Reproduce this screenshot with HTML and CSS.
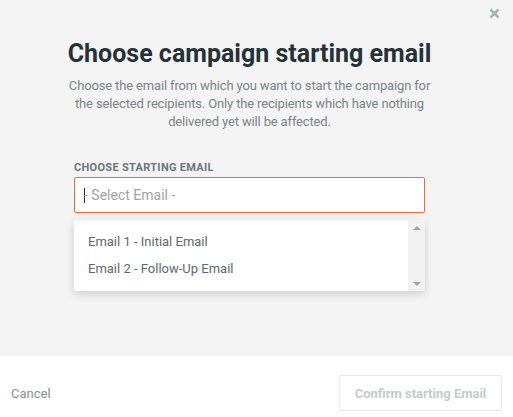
FILE: index.html
```html
<!DOCTYPE html>
<html>
<head>
<meta charset="utf-8">
<link rel="stylesheet" href="styles.css">
</head>
<body>
<div class="modal">
  <div class="modal-body">
    <button class="close" aria-label="Close">
      <svg width="11" height="11" viewBox="0 0 11 11"><path d="M1.5 1.5 L9.5 9.5 M9.5 1.5 L1.5 9.5" stroke="#a9b3b6" stroke-width="2.6" stroke-linecap="butt"/></svg>
    </button>
    <h1 class="title">Choose campaign starting email</h1>
    <p class="desc">Choose the email from which you want to start the campaign for the selected recipients. Only the recipients which have nothing delivered yet will be affected.</p>
    <div class="field">
      <label class="label">Choose starting email</label>
      <div class="picker">
        <span class="caret"></span><span class="placeholder">- Select Email -</span>
      </div>
      <div class="dropdown">
        <ul class="options">
          <li>Email 1 - Initial Email</li>
          <li>Email 2 - Follow-Up Email</li>
        </ul>
        <div class="scrollbar">
          <span class="arrow up"></span>
          <span class="arrow down"></span>
        </div>
      </div>
    </div>
  </div>
  <div class="modal-footer">
    <a class="cancel">Cancel</a>
    <button class="confirm" disabled>Confirm starting Email</button>
  </div>
</div>
</body>
</html>
```
FILE: styles.css
```css
* { box-sizing: border-box; }
html, body { margin: 0; padding: 0; }
body {
  font-family: Roboto, "Liberation Sans", sans-serif;
  background: #ffffff;
  width: 513px;
  height: 417px;
  overflow: hidden;
}
.modal {
  display: flex;
  flex-direction: column;
  height: 417px;
}
.modal-body {
  position: relative;
  background: #f4f4f4;
  height: 356px;
  padding: 38px 14px 0 0;
  display: flex;
  flex-direction: column;
  align-items: center;
}
.close {
  position: absolute;
  top: 8px;
  right: 13px;
  background: none;
  border: 0;
  padding: 0;
  width: 11px;
  height: 11px;
  cursor: pointer;
}
.close svg { display: block; }
.title {
  margin: 0;
  font-size: 25px;
  line-height: 32px;
  font-weight: 700;
  color: #263238;
}
.desc {
  margin: 7px 0 0;
  width: 370px;
  text-align: center;
  font-size: 13px;
  line-height: 18px;
  letter-spacing: -0.15px;
  color: #7a8489;
}
.field {
  width: 351px;
  margin-top: 30px;
  display: flex;
  flex-direction: column;
}
.label {
  font-size: 11px;
  font-weight: 700;
  text-transform: uppercase;
  color: #6d767a;
  line-height: 14px;
  letter-spacing: 0.3px;
}
.picker {
  margin-top: 2px;
  height: 36px;
  background: #fff;
  border: 1px solid #ee6a3f;
  border-radius: 2px;
  display: flex;
  align-items: center;
  padding-left: 9px;
}
.caret {
  width: 1px;
  height: 15px;
  background: #263238;
  margin-right: -1px;
}
.placeholder {
  font-size: 14px;
  color: #9ea4a7;
}
.dropdown {
  margin-top: 7px;
  height: 71px;
  background: #fff;
  border-radius: 3px;
  box-shadow: 0 3px 8px rgba(0,0,0,0.16);
  display: flex;
  overflow: hidden;
}
.options {
  list-style: none;
  margin: 0;
  padding: 8px 0 9px;
  flex: 1;
}
.options li {
  height: 27px;
  line-height: 27px;
  padding-left: 14px;
  font-size: 13px;
  color: #5e686d;
}
.scrollbar {
  width: 17px;
  background: #f1f1f1;
  display: flex;
  flex-direction: column;
  justify-content: space-between;
  align-items: center;
  padding: 6px 0 5px;
}
.arrow {
  width: 0;
  height: 0;
  border-left: 4px solid transparent;
  border-right: 4px solid transparent;
}
.arrow.up { border-bottom: 4px solid #a3a3a3; }
.arrow.down { border-top: 4px solid #a3a3a3; }
.modal-footer {
  flex: 1;
  background: #fff;
  display: flex;
  align-items: center;
  justify-content: space-between;
  padding: 19px 11px 6px;
}
.cancel {
  font-size: 13px;
  color: #8b9194;
  cursor: pointer;
}
.confirm {
  width: 163px;
  height: 36px;
  background: #fff;
  border: 1px solid #e6e8e9;
  border-radius: 2px;
  font-family: Roboto, "Liberation Sans", sans-serif;
  font-size: 13px;
  font-weight: 700;
  color: #c6cbcd;
  padding: 0;
}
```
